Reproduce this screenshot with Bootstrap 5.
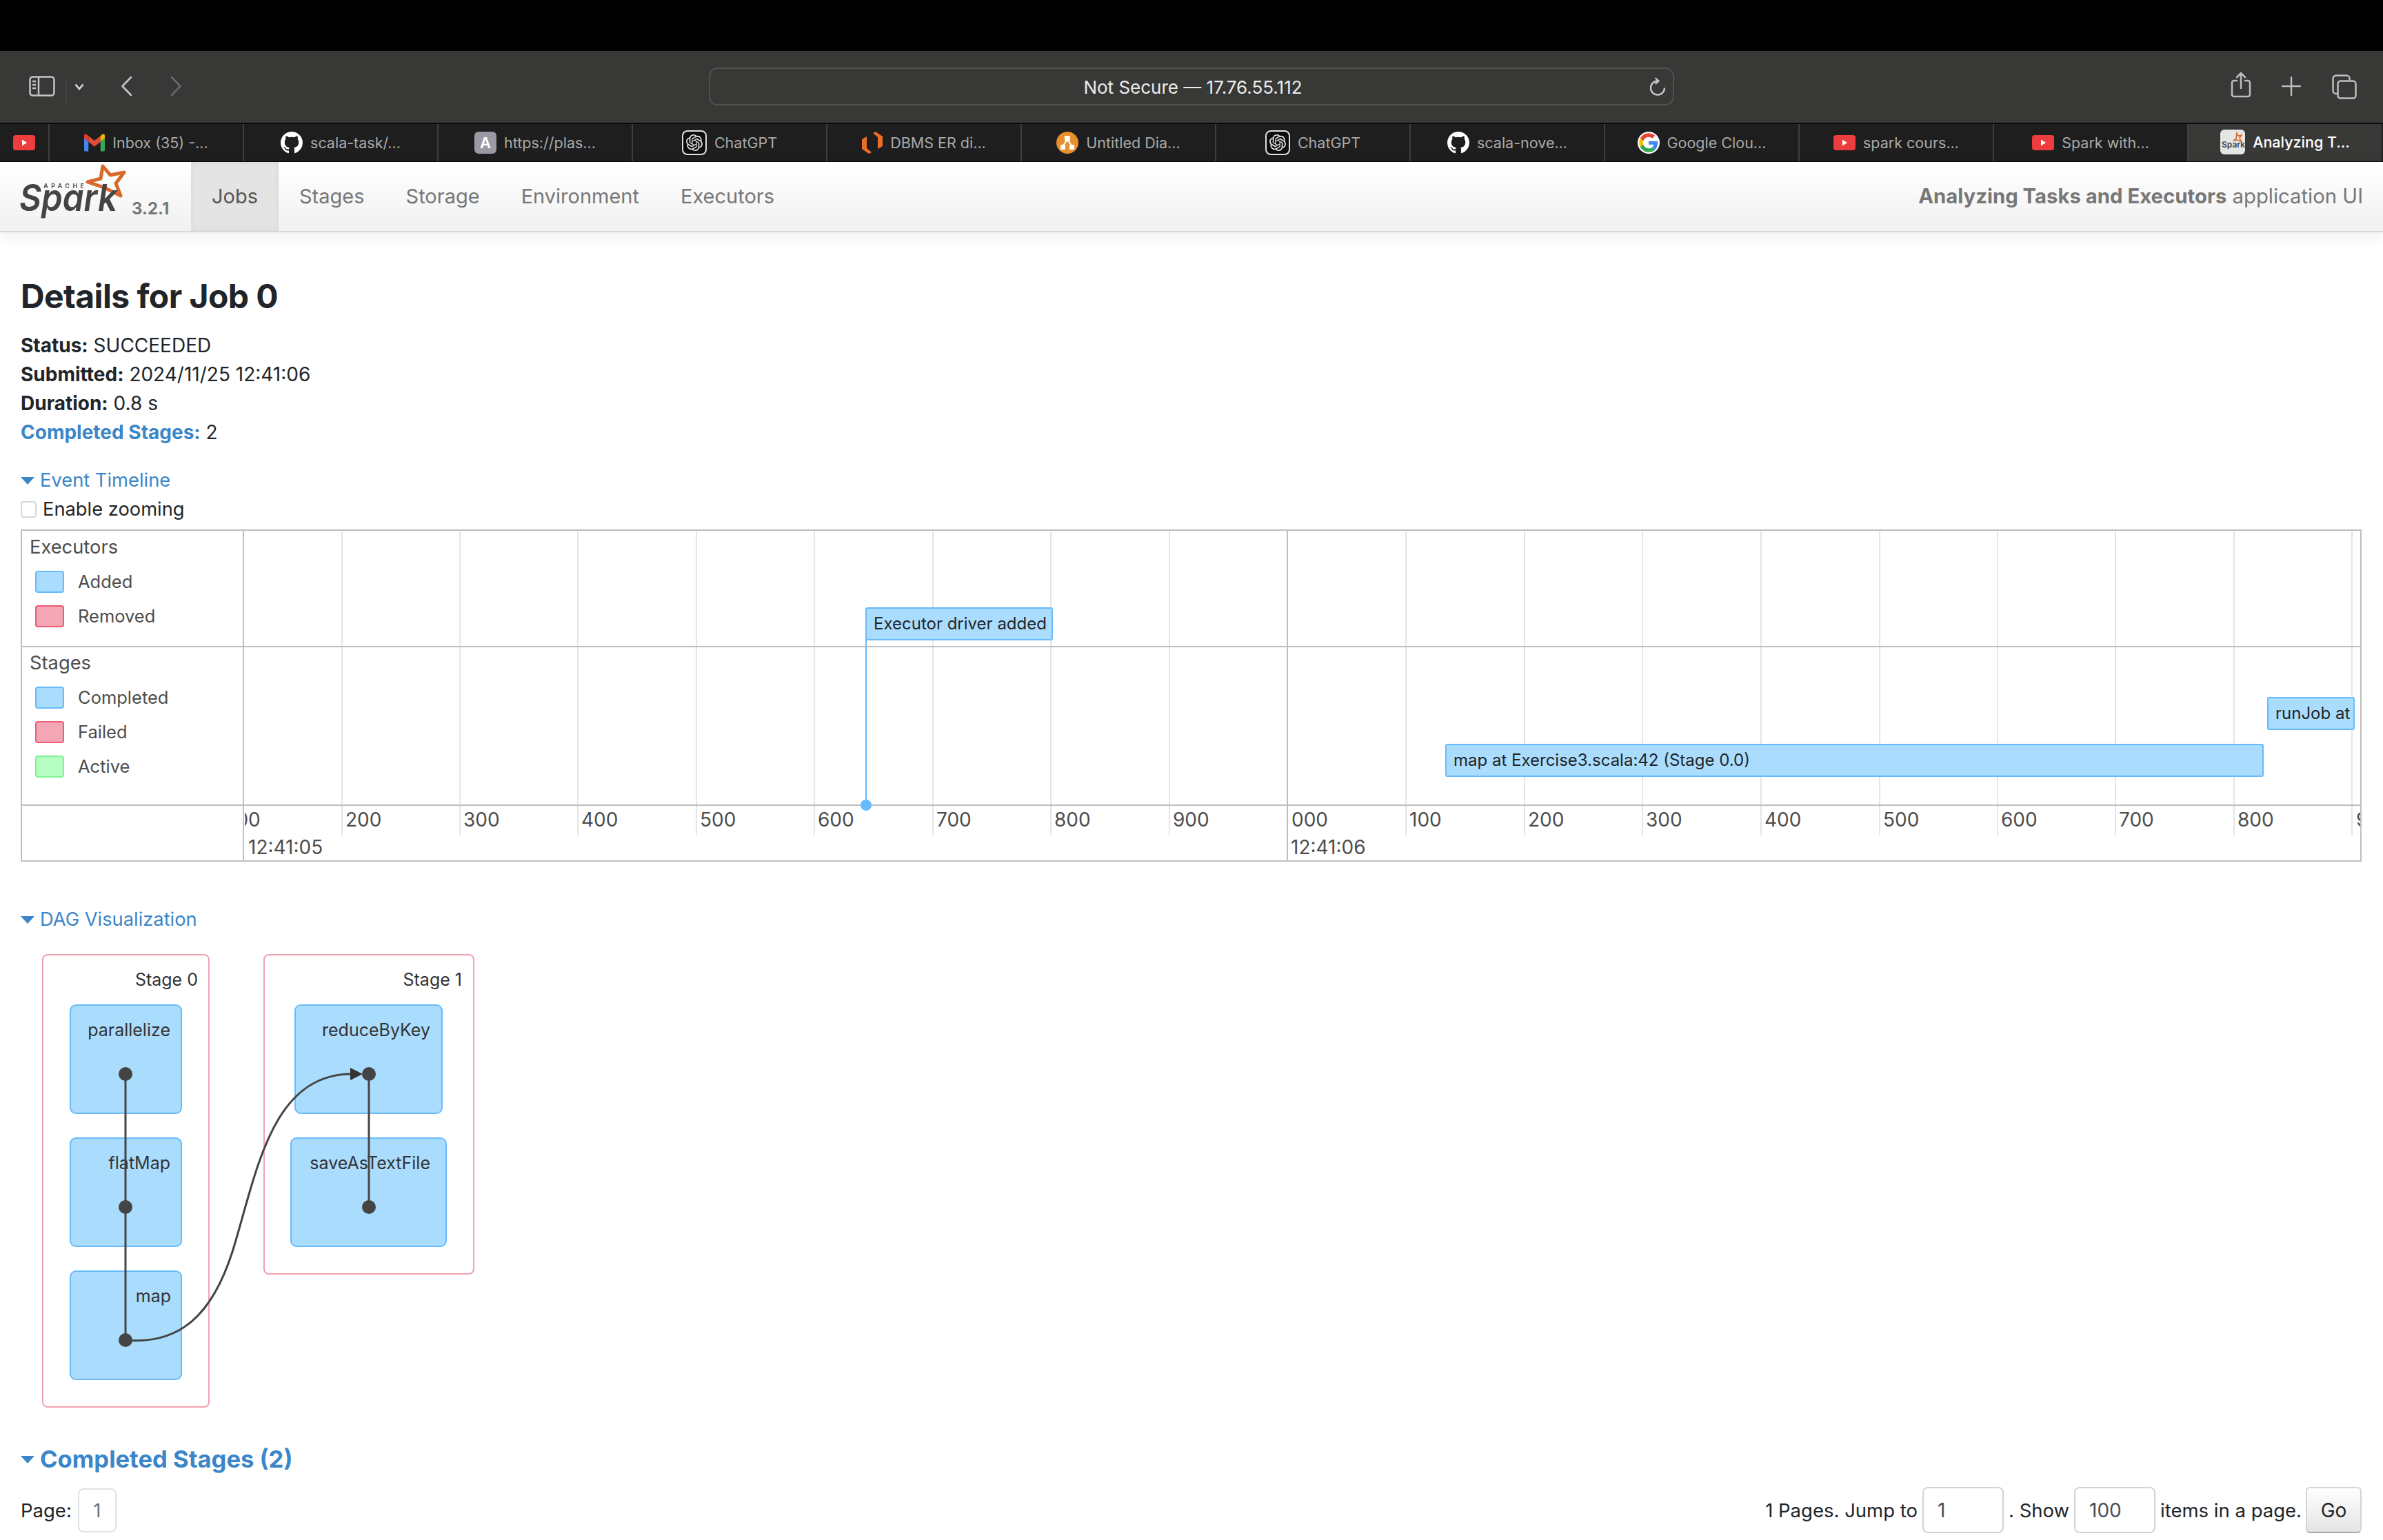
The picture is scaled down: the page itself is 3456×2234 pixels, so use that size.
<!DOCTYPE html>
<html lang="en">
<head>
<meta charset="utf-8">
<title>Spark Job 0</title>
<link href="https://cdn.jsdelivr.net/npm/bootstrap@5.3.0/dist/css/bootstrap.min.css" rel="stylesheet">
<style>
html,body{height:2234px;overflow:hidden}
body{font-family:Inter,"Liberation Sans",sans-serif;font-size:28px;line-height:42px;color:#212529;background:#fff}
.blackbar{height:74px;background:#000}
.toolbar{height:104px;background:#383837;position:relative;color:#c4c4c4}
.toolbar svg{position:absolute}
.urlbar{position:absolute;left:1028px;top:24px;width:1400px;height:55px;border:2px solid #515150;border-radius:13px;color:#ebebeb;font-size:26px;line-height:53px;text-align:center;padding-left:4px}
.tabstrip{height:57px;background:#1e1e1e;border-top:2px solid #0a0a0a;border-bottom:1px solid #0a0a0a;overflow:hidden}
.tabitem{flex:0 0 282px;height:54px;border-left:2px solid #3f3f3f;gap:11px;color:#a9a9a9;font-size:21.500px;line-height:54px;white-space:nowrap}
.tabfirst{flex:0 0 70px;border-left:0}
.tabactive{background:#383837;color:#fff;font-weight:500;margin-top:-2px;height:56px;border-left:2px solid #3f3f3f}
.tabitem svg{flex:none}
.sparkbar{height:102px;padding:0;background:linear-gradient(#fff,#f1f1f1);border-bottom:2px solid #d6d6d6;box-shadow:0 6px 26px rgba(0,0,0,.07);flex-wrap:nowrap}
.brandbox{width:277px;height:100px;position:relative;flex:none}
.brandbox svg{position:absolute;left:0;top:0;filter:blur(.7px)}
.versiontag{position:absolute;left:191px;top:53px;font-size:24px;line-height:30px;font-weight:700;color:#777}
.sparkbar .nav-link{height:100px;line-height:100px;padding:0 30px;color:#777;font-size:29px}
.sparkbar .nav-link.active{background:#e4e4e4;color:#555;box-shadow:inset 0 0 10px rgba(0,0,0,.06)}
.appname{color:#777;font-size:29.300px;line-height:100px;padding-right:29px;margin-left:auto}
.maincol{padding:0 31px 0 30px}
.pagehead{font-size:48px;line-height:58px;font-weight:700;letter-spacing:-.6px;margin:64px 0 21px}
.infolist{list-style:none;padding:0;margin:0}
.linkblue{color:#3b86c8;text-decoration:none}
.caret{display:inline-block;width:0;height:0;border-left:10px solid transparent;border-right:10px solid transparent;border-top:11px solid #3b86c8;vertical-align:middle;margin-right:8px;position:relative;top:-1px}
.sect1,.sect2{font-size:27.300px}
.sect1{margin-top:28px}
.zoomrow{height:42px;gap:9px;font-size:27.300px}
.zoomrow .form-check-input{width:23px;height:24px;margin:0;border:2px solid #d8d8d8;border-radius:4px}
.tlbox{position:relative;height:482px;margin-top:8px;border:2px solid #bfbfbf;color:#4d4d4d;overflow:hidden;font-size:27.300px}
.tlrow{width:321px;padding:3px 0 0 11px;position:relative}
.tlrowrule{position:absolute;left:0;right:0;height:2px;background:#bfbfbf;z-index:1}
.tlsub{height:50px;gap:20px;margin-left:8px;font-size:25.500px}
.swatch{width:42px;height:32px;border-radius:4px;border:2px solid;flex:none}
.sw-blue{background:#aadcfd;border-color:#68bbfb}
.sw-red{background:#f3a6b3;border-color:#ef5a76}
.sw-green{background:#b6fdc4;border-color:#7ff392}
.gridline{position:absolute;top:0;height:442px;width:2px;background:#e5e5e5}
.gridmajor{position:absolute;top:0;bottom:0;width:2px;background:#bfbfbf;z-index:1}
.tlitem{position:absolute;height:48px;background:#aadcfd;border:2px solid #68bbfb;border-radius:3px;color:#212529;font-size:24px;line-height:44px;padding-left:10px;white-space:nowrap;overflow:hidden;z-index:2}
.tlstem{position:absolute;left:1223px;top:158px;width:2px;height:240px;background:#68bbfb;z-index:2}
.tldot{position:absolute;left:1216px;top:390px;width:16px;height:16px;border-radius:50%;background:#68bbfb;z-index:3}
.axisclip{position:absolute;left:323px;right:0;top:399px;height:81px;overflow:hidden}
.axlabel{position:absolute;top:0;font-size:28px;line-height:40px;white-space:nowrap}
.sect2{margin-top:63px}
.dagsvg{display:block;width:720px;height:670px;margin-top:26px}
.dagsvg text{font-family:Inter,"Liberation Sans",sans-serif;font-size:25px;fill:#333;text-anchor:end}
.stagebox{fill:#fff;stroke:#f2a1b0;stroke-width:2}
.dagnode{fill:#aadcfd;stroke:#68bbfb;stroke-width:2}
.dagedge{fill:none;stroke:#444;stroke-width:3}
.dagdot{fill:#444}
.sect3{font-size:34.600px;line-height:42px;font-weight:700;margin-top:44px}
.sect3 .caret{margin-right:8px;top:-2px}
.pagerow{margin-top:20px;height:67px;font-size:27.500px}
.pagebtn{display:inline-block;width:56px;height:64px;line-height:60px;border:2px solid #dee2e6;border-radius:8px;color:#6c757d;text-align:center;margin-left:9px}
.pgfield{width:118px;height:67px;font-size:28px;padding:0 20px;border:2px solid #ced4da;border-radius:8px;color:#495057;margin:0 7px}
.gobtn{width:81px;height:67px;margin-left:6px;padding:0;font-size:28px;color:#212529;border:2px solid #d4d4d4;border-bottom-color:#aaa;border-radius:6px;background:linear-gradient(#fff,#e4e4e4)}
</style>
</head>
<body>
<div class="blackbar"></div>
<div class="toolbar">
  <svg style="left:42px;top:36px" width="38" height="30" viewBox="0 0 38 30" fill="none" stroke="#c4c4c4" stroke-width="2.5"><rect x="1.5" y="1.5" width="35" height="27" rx="4"/><path d="M14 1.5v27M5 8h5M5 13h5M5 18h5"/></svg>
  <svg style="left:95px;top:40px" width="2" height="36" viewBox="0 0 2 36"><path d="M1 0v36" stroke="#4e4e4e" stroke-width="1"/></svg>
  <svg style="left:108px;top:47px" width="14" height="10" viewBox="0 0 14 10" fill="none" stroke="#d8d8d8" stroke-width="2.6"><path d="M1.5 1.5 7 8l5.500-6.500"/></svg>
  <svg style="left:175px;top:36px" width="17" height="30" viewBox="0 0 17 30" fill="none" stroke="#c4c4c4" stroke-width="2.6" stroke-linecap="round" stroke-linejoin="round"><path d="M15 2 2.500 15 15 28"/></svg>
  <svg style="left:247px;top:36px" width="17" height="30" viewBox="0 0 17 30" fill="none" stroke="#6a6a6a" stroke-width="2.6" stroke-linecap="round" stroke-linejoin="round"><path d="M2 2l12.500 13L2 28"/></svg>
  <div class="urlbar">Not Secure — 17.76.55.112</div>
  <svg style="left:2390px;top:38px" width="28" height="28" viewBox="0 0 28 28" fill="none" stroke="#c9c9c9" stroke-width="2.300"><path d="M14 5.500a10 10 0 1 0 10 10"/><path d="M10.500 1l5 4.500-5 4.500"/></svg>
  <svg style="left:3235px;top:30px" width="30" height="38" viewBox="0 0 30 38" fill="none" stroke="#bdbdbd" stroke-width="2.500" stroke-linecap="round" stroke-linejoin="round"><path d="M9 13H5a3 3 0 0 0-3 3v17a3 3 0 0 0 3 3h20a3 3 0 0 0 3-3V16a3 3 0 0 0-3-3h-4M15 24V2M9 8l6-6 6 6"/></svg>
  <svg style="left:3309px;top:37px" width="28" height="28" viewBox="0 0 28 28" fill="none" stroke="#bdbdbd" stroke-width="2.500" stroke-linecap="round"><path d="M14 1v26M1 14h26"/></svg>
  <svg style="left:3382px;top:34px" width="36" height="36" viewBox="0 0 36 36" fill="none" stroke="#bdbdbd" stroke-width="2.500"><rect x="8.500" y="9.500" width="26" height="25" rx="4"/><path d="M8 28H6a4.500 4.500 0 0 1-4.500-4.500V6A4.500 4.500 0 0 1 6 1.500h15a4.500 4.500 0 0 1 4.500 4.500v3"/></svg>
</div>
<div class="tabstrip d-flex">
  <div class="tabitem tabfirst d-flex align-items-center justify-content-center"><svg width="32" height="22" viewBox="0 0 32 22"><rect width="32" height="22" rx="4" fill="#ee3d3f"/><path d="M13 6.500l7 4.500-7 4.500z" fill="#fff"/></svg></div>
  <div class="tabitem d-flex align-items-center justify-content-center"><svg width="30" height="30" viewBox="0 0 24 24"><path d="M0 7V3.800C0 2.300 1 1.200 2.500 2.200L5 4v7z" fill="#e33b2e"/><path d="M5 11l7 5.500 7-5.500V4l-7 5.500L5 4z" fill="#dd4b39"/><path d="M19 4l2.500-1.800C23 1.200 24 2.300 24 3.800V7l-5 4z" fill="#f4b400"/><path d="M0 7l5 4v11H1.500C.6 22 0 21.400 0 20.500z" fill="#4285f4"/><path d="M24 7l-5 4v11h3.500c.9 0 1.500-.6 1.500-1.500z" fill="#34a853"/></svg><span>Inbox (35) -...</span></div>
  <div class="tabitem d-flex align-items-center justify-content-center"><svg width="32" height="32" viewBox="0 0 16 16"><path fill="#fff" d="M8 0C3.580 0 0 3.580 0 8c0 3.540 2.290 6.530 5.470 7.590.4.070.55-.17.55-.38 0-.19-.01-.82-.01-1.490-2.010.37-2.530-.49-2.690-.94-.09-.23-.48-.94-.82-1.130-.28-.15-.68-.52-.01-.53.63-.01 1.080.58 1.230.82.72 1.210 1.870.87 2.330.66.07-.52.28-.87.51-1.070-1.780-.2-3.640-.89-3.640-3.950 0-.87.31-1.590.82-2.150-.08-.2-.36-1.020.08-2.120 0 0 .67-.21 2.200.82.64-.18 1.320-.27 2-.27.68 0 1.360.09 2 .27 1.530-1.040 2.200-.82 2.200-.82.44 1.100.16 1.920.08 2.120.51.56.82 1.270.82 2.150 0 3.070-1.870 3.750-3.650 3.950.29.25.54.73.54 1.480 0 1.070-.01 1.930-.01 2.200 0 .21.15.46.55.38A8.013 8.013 0 0016 8c0-4.420-3.580-8-8-8z"/></svg><span>scala-task/...</span></div>
  <div class="tabitem d-flex align-items-center justify-content-center"><svg width="32" height="32" viewBox="0 0 32 32"><rect width="32" height="32" rx="6" fill="#9a9aa6"/><text x="16" y="24" text-anchor="middle" font-family="Inter,sans-serif" font-size="22" font-weight="600" fill="#fff">A</text></svg><span>https://plas...</span></div>
  <div class="tabitem d-flex align-items-center justify-content-center"><svg width="36" height="36" viewBox="0 0 36 36"><rect x="1" y="1" width="34" height="34" rx="7" fill="#0d0d0d" stroke="#e0e0e0" stroke-width="2"/><g transform="translate(6 6)"><path fill="#eee" d="M22.282 9.821a5.985 5.985 0 0 0-.516-4.910 6.046 6.046 0 0 0-6.510-2.900A6.065 6.065 0 0 0 4.981 4.180a5.985 5.985 0 0 0-3.998 2.900 6.046 6.046 0 0 0 .743 7.097 5.980 5.980 0 0 0 .51 4.911 6.051 6.051 0 0 0 6.515 2.900A5.985 5.985 0 0 0 13.260 24a6.056 6.056 0 0 0 5.772-4.206 5.990 5.990 0 0 0 3.997-2.900 6.056 6.056 0 0 0-.747-7.073zM13.260 22.430a4.476 4.476 0 0 1-2.876-1.040l.141-.081 4.779-2.758a.795.795 0 0 0 .392-.681v-6.737l2.020 1.168a.071.071 0 0 1 .038.052v5.583a4.504 4.504 0 0 1-4.494 4.494zM3.600 18.304a4.470 4.470 0 0 1-.535-3.014l.142.085 4.783 2.759a.771.771 0 0 0 .78 0l5.843-3.369v2.332a.08.08 0 0 1-.033.062L9.740 19.950a4.500 4.500 0 0 1-6.140-1.646zM2.340 7.896a4.485 4.485 0 0 1 2.366-1.973V11.600a.766.766 0 0 0 .388.676l5.815 3.355-2.020 1.168a.076.076 0 0 1-.071 0l-4.830-2.786A4.504 4.504 0 0 1 2.340 7.872zm16.597 3.855l-5.833-3.387L15.119 7.200a.076.076 0 0 1 .071 0l4.830 2.791a4.494 4.494 0 0 1-.676 8.105v-5.678a.79.79 0 0 0-.407-.667zm2.010-3.023l-.141-.085-4.774-2.782a.776.776 0 0 0-.785 0L9.409 9.230V6.897a.066.066 0 0 1 .028-.061l4.830-2.787a4.500 4.500 0 0 1 6.680 4.660zm-12.640 4.135l-2.020-1.164a.08.08 0 0 1-.038-.057V6.075a4.500 4.500 0 0 1 7.375-3.453l-.142.08L8.704 5.460a.795.795 0 0 0-.393.681zm1.097-2.365l2.602-1.500 2.607 1.500v2.999l-2.597 1.500-2.607-1.500z"/></g></svg><span>ChatGPT</span></div>
  <div class="tabitem d-flex align-items-center justify-content-center"><svg width="30" height="32" viewBox="0 0 30 32"><path fill="#ea6e26" d="M0 11l7-4v17l7 6-4 2-10-7zM30 21l-7 4V8l-7-6 4-2 10 7z"/></svg><span>DBMS ER di...</span></div>
  <div class="tabitem d-flex align-items-center justify-content-center"><svg width="32" height="32" viewBox="0 0 32 32"><circle cx="16" cy="16" r="16" fill="#e8902e"/><path d="M16 12 9 21M16 12l7 9" stroke="#fff" stroke-width="2"/><rect x="12" y="6" width="8" height="8" rx="1" fill="#fff"/><rect x="6" y="19" width="7" height="7" rx="1" fill="#fff"/><rect x="19" y="19" width="7" height="7" rx="1" fill="#fff"/></svg><span>Untitled Dia...</span></div>
  <div class="tabitem d-flex align-items-center justify-content-center"><svg width="36" height="36" viewBox="0 0 36 36"><rect x="1" y="1" width="34" height="34" rx="7" fill="#0d0d0d" stroke="#e0e0e0" stroke-width="2"/><g transform="translate(6 6)"><path fill="#eee" d="M22.282 9.821a5.985 5.985 0 0 0-.516-4.910 6.046 6.046 0 0 0-6.510-2.900A6.065 6.065 0 0 0 4.981 4.180a5.985 5.985 0 0 0-3.998 2.900 6.046 6.046 0 0 0 .743 7.097 5.980 5.980 0 0 0 .51 4.911 6.051 6.051 0 0 0 6.515 2.900A5.985 5.985 0 0 0 13.260 24a6.056 6.056 0 0 0 5.772-4.206 5.990 5.990 0 0 0 3.997-2.900 6.056 6.056 0 0 0-.747-7.073zM13.260 22.430a4.476 4.476 0 0 1-2.876-1.040l.141-.081 4.779-2.758a.795.795 0 0 0 .392-.681v-6.737l2.020 1.168a.071.071 0 0 1 .038.052v5.583a4.504 4.504 0 0 1-4.494 4.494zM3.600 18.304a4.470 4.470 0 0 1-.535-3.014l.142.085 4.783 2.759a.771.771 0 0 0 .78 0l5.843-3.369v2.332a.08.08 0 0 1-.033.062L9.740 19.950a4.500 4.500 0 0 1-6.140-1.646zM2.340 7.896a4.485 4.485 0 0 1 2.366-1.973V11.600a.766.766 0 0 0 .388.676l5.815 3.355-2.020 1.168a.076.076 0 0 1-.071 0l-4.830-2.786A4.504 4.504 0 0 1 2.340 7.872zm16.597 3.855l-5.833-3.387L15.119 7.200a.076.076 0 0 1 .071 0l4.830 2.791a4.494 4.494 0 0 1-.676 8.105v-5.678a.79.79 0 0 0-.407-.667zm2.010-3.023l-.141-.085-4.774-2.782a.776.776 0 0 0-.785 0L9.409 9.230V6.897a.066.066 0 0 1 .028-.061l4.830-2.787a4.500 4.500 0 0 1 6.680 4.660zm-12.640 4.135l-2.020-1.164a.08.08 0 0 1-.038-.057V6.075a4.500 4.500 0 0 1 7.375-3.453l-.142.08L8.704 5.460a.795.795 0 0 0-.393.681zm1.097-2.365l2.602-1.500 2.607 1.500v2.999l-2.597 1.500-2.607-1.500z"/></g></svg><span>ChatGPT</span></div>
  <div class="tabitem d-flex align-items-center justify-content-center"><svg width="32" height="32" viewBox="0 0 16 16"><path fill="#fff" d="M8 0C3.580 0 0 3.580 0 8c0 3.540 2.290 6.530 5.470 7.590.4.070.55-.17.55-.38 0-.19-.01-.82-.01-1.490-2.010.37-2.530-.49-2.690-.94-.09-.23-.48-.94-.82-1.130-.28-.15-.68-.52-.01-.53.63-.01 1.080.58 1.230.82.72 1.210 1.870.87 2.330.66.07-.52.28-.87.51-1.070-1.780-.2-3.640-.89-3.640-3.950 0-.87.31-1.590.82-2.150-.08-.2-.36-1.020.08-2.120 0 0 .67-.21 2.200.82.64-.18 1.320-.27 2-.27.68 0 1.360.09 2 .27 1.530-1.040 2.200-.82 2.200-.82.44 1.100.16 1.920.08 2.120.51.56.82 1.270.82 2.150 0 3.070-1.870 3.750-3.650 3.950.29.25.54.73.54 1.480 0 1.070-.01 1.930-.01 2.200 0 .21.15.46.55.38A8.013 8.013 0 0016 8c0-4.420-3.580-8-8-8z"/></svg><span>scala-nove...</span></div>
  <div class="tabitem d-flex align-items-center justify-content-center"><svg width="32" height="32" viewBox="-4 -4 56 56"><circle cx="24" cy="24" r="28" fill="#fff"/><path fill="#EA4335" d="M24 9.500c3.540 0 6.710 1.220 9.210 3.600l6.850-6.850C35.900 2.380 30.470 0 24 0 14.620 0 6.510 5.380 2.560 13.220l7.980 6.190C12.430 13.720 17.740 9.500 24 9.500z"/><path fill="#4285F4" d="M46.980 24.550c0-1.570-.15-3.090-.38-4.550H24v9.020h12.940c-.58 2.960-2.260 5.480-4.780 7.180l7.730 6c4.510-4.180 7.090-10.360 7.090-17.650z"/><path fill="#FBBC05" d="M10.530 28.590c-.48-1.450-.76-2.990-.76-4.590s.27-3.140.76-4.590l-7.980-6.190C.92 16.460 0 20.120 0 24c0 3.880.92 7.540 2.560 10.780l7.970-6.190z"/><path fill="#34A853" d="M24 48c6.480 0 11.930-2.130 15.890-5.810l-7.730-6c-2.150 1.450-4.920 2.300-8.160 2.300-6.260 0-11.570-4.220-13.470-9.910l-7.980 6.190C6.510 42.620 14.620 48 24 48z"/></svg><span>Google Clou...</span></div>
  <div class="tabitem d-flex align-items-center justify-content-center"><svg width="32" height="22" viewBox="0 0 32 22"><rect width="32" height="22" rx="4" fill="#ee3d3f"/><path d="M13 6.500l7 4.500-7 4.500z" fill="#fff"/></svg><span>spark cours...</span></div>
  <div class="tabitem d-flex align-items-center justify-content-center"><svg width="32" height="22" viewBox="0 0 32 22"><rect width="32" height="22" rx="4" fill="#ee3d3f"/><path d="M13 6.500l7 4.500-7 4.500z" fill="#fff"/></svg><span>Spark with...</span></div>
  <div class="tabitem tabactive d-flex align-items-center justify-content-center"><svg width="36" height="36" viewBox="0 0 36 36"><rect width="36" height="36" rx="6" fill="#e6e6e6"/><path d="M24 5l2 4 5-1-3 4 2 5-5-2-6 1 4-3z" fill="none" stroke="#d9692a" stroke-width="1.600"/><text x="2" y="26" font-family="Inter,sans-serif" font-size="12" font-weight="600" fill="#444">Spark</text></svg><span>Analyzing T...</span></div>
</div>
<nav class="navbar sparkbar d-flex align-items-start">
  <div class="brandbox">
    <svg width="190" height="100" viewBox="0 235 190 100">
      <path d="M149 241l11 13 20-4-12 16 7 18-18-9-6-3-24-8 19-5z" fill="none" stroke="#d9692a" stroke-width="5" stroke-linejoin="round"/>
      <text x="63" y="273" font-family="Inter,sans-serif" font-size="9" font-weight="700" fill="#555" textLength="59" lengthAdjust="spacing">APACHE</text>
      <text x="28" y="306" font-family="Inter,sans-serif" font-size="54" font-weight="600" font-style="italic" fill="#444" textLength="142" lengthAdjust="spacingAndGlyphs">Spark</text>
    </svg>
    <span class="versiontag">3.2.1</span>
  </div>
  <ul class="nav flex-nowrap">
    <li class="nav-item"><a class="nav-link active" href="#">Jobs</a></li>
    <li class="nav-item"><a class="nav-link" href="#">Stages</a></li>
    <li class="nav-item"><a class="nav-link" href="#">Storage</a></li>
    <li class="nav-item"><a class="nav-link" href="#">Environment</a></li>
    <li class="nav-item"><a class="nav-link" href="#">Executors</a></li>
  </ul>
  <span class="appname"><strong>Analyzing Tasks and Executors</strong> application UI</span>
</nav>
<main class="maincol">
  <h3 class="pagehead">Details for Job 0</h3>
  <ul class="infolist">
    <li><strong>Status:</strong> SUCCEEDED</li>
    <li><strong>Submitted:</strong> 2024/11/25 12:41:06</li>
    <li><strong>Duration:</strong> 0.8 s</li>
    <li><a class="linkblue fw-bold" href="#">Completed Stages:</a> 2</li>
  </ul>
  <div class="sect1"><a class="linkblue" href="#"><span class="caret"></span>Event Timeline</a></div>
  <div class="zoomrow d-flex align-items-center"><input class="form-check-input" type="checkbox" id="zoomopt"><label for="zoomopt">Enable zooming</label></div>
  <div class="tlbox">
    <div class="tlrow">
      <div>Executors</div>
      <div class="mt-1"></div>
      <div class="tlsub d-flex align-items-center"><span class="swatch sw-blue"></span>Added</div>
      <div class="tlsub d-flex align-items-center"><span class="swatch sw-red"></span>Removed</div>
    </div>
    <div class="tlrowrule" style="top:167px"></div>
    <div class="tlrow" style="position:absolute;top:168px;left:0">
      <div>Stages</div>
      <div class="mt-1"></div>
      <div class="tlsub d-flex align-items-center"><span class="swatch sw-blue"></span>Completed</div>
      <div class="tlsub d-flex align-items-center"><span class="swatch sw-red"></span>Failed</div>
      <div class="tlsub d-flex align-items-center"><span class="swatch sw-green"></span>Active</div>
    </div>
    <div class="tlrowrule" style="top:397px"></div>
    <div class="gridmajor" style="left:320px"></div>
    <div class="gridmajor" style="left:1834px"></div>
    <div class="gridline" style="left:463px"></div><div class="gridline" style="left:634px"></div><div class="gridline" style="left:805px"></div><div class="gridline" style="left:977px"></div><div class="gridline" style="left:1148px"></div><div class="gridline" style="left:1320px"></div><div class="gridline" style="left:1491px"></div><div class="gridline" style="left:1663px"></div>
    <div class="gridline" style="left:2006px"></div><div class="gridline" style="left:2178px"></div><div class="gridline" style="left:2349px"></div><div class="gridline" style="left:2521px"></div><div class="gridline" style="left:2693px"></div><div class="gridline" style="left:2864px"></div><div class="gridline" style="left:3035px"></div><div class="gridline" style="left:3207px"></div><div class="gridline" style="left:3378px"></div>
    <div class="tlstem"></div><div class="tldot"></div>
    <div class="tlitem" style="left:1223px;top:111px;width:272px">Executor driver added</div>
    <div class="tlitem" style="left:2064px;top:309px;width:1187px">map at Exercise3.scala:42 (Stage 0.0)</div>
    <div class="tlitem" style="left:3256px;top:241px;width:127px">runJob at</div>
    <div class="axisclip">
      <span class="axlabel" style="left:-24px">100</span><span class="axlabel" style="left:146px">200</span><span class="axlabel" style="left:317px">300</span><span class="axlabel" style="left:488px">400</span><span class="axlabel" style="left:660px">500</span><span class="axlabel" style="left:831px">600</span><span class="axlabel" style="left:1003px">700</span><span class="axlabel" style="left:1174px">800</span><span class="axlabel" style="left:1346px">900</span><span class="axlabel" style="left:1518px">000</span><span class="axlabel" style="left:1689px">100</span><span class="axlabel" style="left:1861px">200</span><span class="axlabel" style="left:2032px">300</span><span class="axlabel" style="left:2204px">400</span><span class="axlabel" style="left:2376px">500</span><span class="axlabel" style="left:2547px">600</span><span class="axlabel" style="left:2718px">700</span><span class="axlabel" style="left:2890px">800</span><span class="axlabel" style="left:3062px">900</span>
      <span class="axlabel" style="left:5px;top:40px">12:41:05</span><span class="axlabel" style="left:1517px;top:40px">12:41:06</span>
    </div>
  </div>
  <div class="sect2"><a class="linkblue" href="#"><span class="caret"></span>DAG Visualization</a></div>
  <svg class="dagsvg" viewBox="30 1380 720 670">
    <rect class="stagebox" x="62" y="1384" width="241" height="656" rx="7"/>
    <rect class="stagebox" x="383" y="1384" width="304" height="463" rx="7"/>
    <text x="287" y="1429">Stage 0</text>
    <text x="670" y="1429">Stage 1</text>
    <rect class="dagnode" x="102" y="1457" width="161" height="157" rx="8"/>
    <rect class="dagnode" x="102" y="1650" width="161" height="157" rx="8"/>
    <rect class="dagnode" x="102" y="1843" width="161" height="157" rx="8"/>
    <rect class="dagnode" x="428" y="1457" width="213" height="157" rx="8"/>
    <rect class="dagnode" x="422" y="1650" width="225" height="157" rx="8"/>
    <text x="247" y="1502">parallelize</text>
    <text x="247" y="1695">flatMap</text>
    <text x="248" y="1888">map</text>
    <text x="624" y="1502">reduceByKey</text>
    <text x="624" y="1695">saveAsTextFile</text>
    <path class="dagedge" d="M182 1557V1943M535 1557V1750"/>
    <path class="dagedge" d="M182 1943C262 1950 308 1905 337 1815C372 1703 392 1557 510 1557"/>
    <path d="M508 1548l18 9-18 9z" fill="#333"/>
    <circle class="dagdot" cx="182" cy="1557" r="10"/><circle class="dagdot" cx="182" cy="1750" r="10"/><circle class="dagdot" cx="182" cy="1943" r="10"/>
    <circle class="dagdot" cx="535" cy="1557" r="10"/><circle class="dagdot" cx="535" cy="1750" r="10"/>
  </svg>
  <div class="sect3"><a class="linkblue" href="#"><span class="caret"></span>Completed Stages (2)</a></div>
  <div class="pagerow d-flex align-items-center justify-content-between">
    <div>Page:<span class="pagebtn">1</span></div>
    <form class="d-flex align-items-center m-0">
      <span>1 Pages. Jump to</span><input class="form-control pgfield" type="text" value="1"><span>. Show</span><input class="form-control pgfield" type="text" value="100"><span>items in a page.</span><button class="btn gobtn" type="button">Go</button>
    </form>
  </div>
</main>
</body>
</html>
